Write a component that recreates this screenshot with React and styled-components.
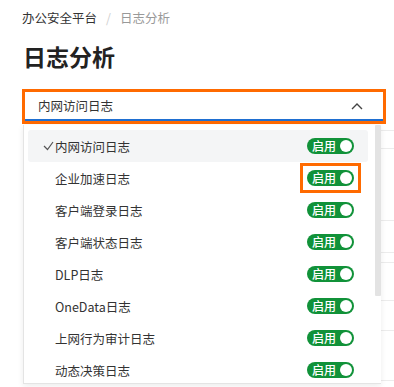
import React from "react";
import styled, { createGlobalStyle } from "styled-components";

const Global = createGlobalStyle`
  html, body { margin: 0; padding: 0; background: #fff; }
  body { font-family: "Noto Sans CJK SC", "Noto Sans", sans-serif; color: #333; }
`;

const Page = styled.div`
  position: relative;
  width: 394px;
  height: 387px;
  overflow: hidden;
  background: #fff;
`;

const Content = styled.div`
  padding: 9px 0 0 22px;
  display: flex;
  flex-direction: column;
`;

const Breadcrumb = styled.div`
  display: flex;
  align-items: center;
  gap: 9px;
  font-size: 12.5px;
  line-height: 18px;
  height: 18px;
`;

const Crumb = styled.span`
  color: ${(p) => (p.$current ? "#999" : "#333")};
`;

const Sep = styled.span`
  color: #d0d0d0;
`;

const Title = styled.h1`
  margin: 14px 0 0 1px;
  font-size: 23px;
  font-weight: 700;
  line-height: 30px;
  color: #222;
`;

const SelectWrap = styled.div`
  margin-top: 18px;
  width: 358px;
  border: 3px solid #ff6a00;
`;

const Select = styled.div`
  height: 27px;
  border-bottom: 2px solid #1f6fd1;
  display: flex;
  align-items: center;
  justify-content: space-between;
  padding: 0 20px 0 13px;
  font-size: 12.5px;
  color: #333;
`;

const Panel = styled.div`
  position: absolute;
  left: 23px;
  top: 125px;
  width: 357px;
  height: 258px;
  background: #fff;
  border-left: 1px solid #e4e4e4;
  border-bottom: 1px solid #e4e4e4;
  box-shadow: 0 2px 6px rgba(0, 0, 0, 0.08);
  display: flex;
`;

const List = styled.div`
  flex: 1;
  padding: 5px 7px 0 4px;
  display: flex;
  flex-direction: column;
`;

const Row = styled.div`
  height: 32px;
  flex-shrink: 0;
  display: flex;
  align-items: center;
  justify-content: space-between;
  padding: 0 14px 0 15px;
  border-radius: 3px;
  background: ${(p) => (p.$active ? "#f4f5f6" : "transparent")};
  font-size: 12.5px;
  color: #333;
`;

const Label = styled.span`
  display: flex;
  align-items: center;
  padding-left: 12px;
  position: relative;
`;

const Check = styled.svg`
  position: absolute;
  left: 0;
  top: 50%;
  margin-top: -5px;
`;

const Toggle = styled.span`
  width: 47px;
  height: 16px;
  border-radius: 8px;
  background: #119239;
  display: flex;
  align-items: center;
  justify-content: space-between;
  padding: 0 2px 0 5px;
  box-sizing: border-box;
  color: #fff;
  font-size: 12px;
  line-height: 16px;
  font-weight: 500;
`;

const Knob = styled.span`
  width: 12px;
  height: 12px;
  border-radius: 50%;
  background: #fff;
`;

const Highlight = styled.span`
  display: inline-flex;
  padding: 4px;
  margin: -7px -7px;
  border: 3px solid #ff6a00;
`;

const Scrollbar = styled.div`
  width: 6px;
  background: #fff;
  display: flex;
  flex-direction: column;
`;

const Thumb = styled.div`
  height: 171px;
  background: #e3e3e3;
  border-radius: 1px;
`;

const BgLines = styled.div`
  position: absolute;
  left: 381px;
  top: 0;
  width: 13px;
  height: 387px;
`;

const BgLine = styled.div`
  position: absolute;
  left: 0;
  right: 0;
  height: 1px;
  background: #ececec;
`;

const items = [
  "内网访问日志",
  "企业加速日志",
  "客户端登录日志",
  "客户端状态日志",
  "DLP日志",
  "OneData日志",
  "上网行为审计日志",
  "动态决策日志",
];

function Switch() {
  return (
    <Toggle>
      <span>启用</span>
      <Knob />
    </Toggle>
  );
}

export default function App() {
  return (
    <Page>
      <Global />
      <Content>
        <Breadcrumb>
          <Crumb>办公安全平台</Crumb>
          <Sep>/</Sep>
          <Crumb $current>日志分析</Crumb>
        </Breadcrumb>
        <Title>日志分析</Title>
        <SelectWrap>
          <Select>
            <span>内网访问日志</span>
            <svg width="12" height="8" viewBox="0 0 12 8">
              <path d="M1 7 L6 2 L11 7" fill="none" stroke="#444" strokeWidth="1.4" />
            </svg>
          </Select>
        </SelectWrap>
      </Content>
      <BgLines>
        {[130, 148, 220, 252, 262, 300, 330, 380].map((t) => (
          <BgLine key={t} style={{ top: t }} />
        ))}
      </BgLines>
      <Panel>
        <List>
          {items.map((it, i) => (
            <Row key={it} $active={i === 0}>
              <Label>
                {i === 0 && (
                  <Check width="11" height="10" viewBox="0 0 11 10">
                    <path d="M1 5 L4.5 8.5 L10 1" fill="none" stroke="#555" strokeWidth="1.2" />
                  </Check>
                )}
                {it}
              </Label>
              {i === 1 ? (
                <Highlight>
                  <Switch />
                </Highlight>
              ) : (
                <Switch />
              )}
            </Row>
          ))}
        </List>
        <Scrollbar>
          <Thumb />
        </Scrollbar>
      </Panel>
    </Page>
  );
}
